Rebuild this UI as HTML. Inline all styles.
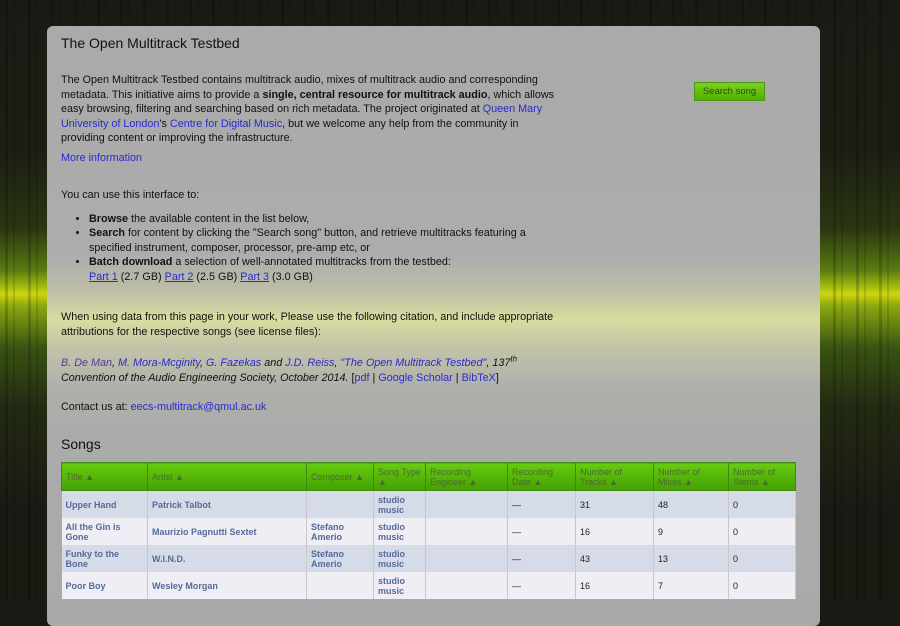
<!DOCTYPE html><html><head><style>
body{margin:0;width:900px;height:600px;overflow:hidden;font-family:"Liberation Sans",sans-serif;
background:linear-gradient(180deg,#1a1a14 0%,#1c1e14 25%,#2a3612 38%,#5a7a10 45%,#a8c010 48%,#d0d410 49%,#8aa810 51%,#3a5212 58%,#222a12 68%,#1a1a14 85%,#1a1a12 100%);}
.stripes{position:absolute;left:0;top:0;width:900px;height:600px;background:repeating-linear-gradient(90deg,rgba(0,0,0,0) 0 5px,rgba(0,0,0,.18) 5px 8px,rgba(0,0,0,0) 8px 13px,rgba(0,0,0,.12) 13px 15px,rgba(0,0,0,0) 15px 23px);}
.panel{position:absolute;left:47px;top:26px;width:773px;height:600px;border-radius:6px;
background:linear-gradient(180deg,#aaaaaa 0%,#acacac 38%,#bcbea8 44%,#d4d6a0 48%,#dadca0 49%,#c4c6a8 53%,#b0b0aa 60%,#ababab 68%,#a9a9a9 100%);font-size:10.8px;color:#111;}
a{color:#2a2ad0;text-decoration:none}
.t{position:absolute;left:14px;}
h1{position:absolute;left:14px;top:9px;margin:0;font-size:14px;font-weight:normal}
p{margin:0;line-height:14.5px}
.btn{position:absolute;left:647px;top:56px;width:69px;height:17px;background:linear-gradient(#7ad020,#52b000);border:1px solid #4a9a10;font-size:9.5px;color:#2a4a10;text-align:center;line-height:17px}
ul{margin:0;padding-left:28px;line-height:14.5px}
table{position:absolute;left:14px;top:436px;border-collapse:collapse;font-size:9px;width:735px}
th{background:linear-gradient(#66cc10,#44a000);color:#4a6a30;font-weight:normal;text-align:left;height:27px;border:1px solid #3c8a10;padding:0 4px;line-height:10px}
td{height:27px;padding:0 4px;border-right:1px solid #c8c8c8;font-weight:bold;color:#556a9a;line-height:10px;vertical-align:middle}
td.n{font-weight:normal;color:#222}
tr.a td{background:#d6dbe8}tr.b td{background:#eeeef4}
</style></head><body><div class="stripes"></div>
<div class="panel">
<h1>The Open Multitrack Testbed</h1>
<div class="btn">Search song</div>
<div class="t" style="top:47px;width:500px"><p>The Open Multitrack Testbed contains multitrack audio, mixes of multitrack audio and corresponding metadata. This initiative aims to provide a <b>single, central resource for multitrack audio</b>, which allows easy browsing, filtering and searching based on rich metadata. The project originated at <a>Queen Mary University of London</a>'s <a>Centre for Digital Music</a>, but we welcome any help from the community in providing content or improving the infrastructure.</p></div>
<div class="t" style="top:125px"><p><a>More information</a></p></div>
<div class="t" style="top:162px;width:500px"><p>You can use this interface to:</p>
<ul style="margin-top:9px"><li><b>Browse</b> the available content in the list below,</li>
<li><b>Search</b> for content by clicking the "Search song" button, and retrieve multitracks featuring a specified instrument, composer, processor, pre-amp etc, or</li>
<li><b>Batch download</b> a selection of well-annotated multitracks from the testbed:<br><a style="text-decoration:underline">Part 1</a> (2.7 GB) <a style="text-decoration:underline">Part 2</a> (2.5 GB) <a style="text-decoration:underline">Part 3</a> (3.0 GB)</li></ul></div>
<div class="t" style="top:284px;width:510px"><p>When using data from this page in your work, Please use the following citation, and include appropriate attributions for the respective songs (see license files):</p></div>
<div class="t" style="top:330px;width:520px"><p><i><a style="color:#5a3aa0">B. De Man</a>, <a>M. Mora-Mcginity</a>, <a>G. Fazekas</a> and <a>J.D. Reiss</a>, <a>"The Open Multitrack Testbed"</a>, 137<sup style="font-size:8px;line-height:0">th</sup><br>Convention of the Audio Engineering Society, October 2014.</i> [<a>pdf</a> | <a>Google Scholar</a> | <a>BibTeX</a>]</p></div>
<div class="t" style="top:374px"><p>Contact us at: <a>eecs-multitrack@qmul.ac.uk</a></p></div>
<div class="t" style="top:410px;font-size:14px">Songs</div>
<table>
<tr><th style="width:77px">Title &#9650;</th><th style="width:150px">Artist &#9650;</th><th style="width:58px">Composer &#9650;</th><th style="width:43px">Song Type &#9650;</th><th style="width:73px">Recording Engineer &#9650;</th><th style="width:59px">Recording Date &#9650;</th><th style="width:69px">Number of Tracks &#9650;</th><th style="width:66px">Number of Mixes &#9650;</th><th>Number of Stems &#9650;</th></tr>
<tr class="a"><td>Upper Hand</td><td>Patrick Talbot</td><td></td><td>studio music</td><td></td><td class="n">—</td><td class="n">31</td><td class="n">48</td><td class="n">0</td></tr>
<tr class="b"><td>All the Gin is Gone</td><td>Maurizio Pagnutti Sextet</td><td>Stefano Amerio</td><td>studio music</td><td></td><td class="n">—</td><td class="n">16</td><td class="n">9</td><td class="n">0</td></tr>
<tr class="a"><td>Funky to the Bone</td><td>W.I.N.D.</td><td>Stefano Amerio</td><td>studio music</td><td></td><td class="n">—</td><td class="n">43</td><td class="n">13</td><td class="n">0</td></tr>
<tr class="b"><td>Poor Boy</td><td>Wesley Morgan</td><td></td><td>studio music</td><td></td><td class="n">—</td><td class="n">16</td><td class="n">7</td><td class="n">0</td></tr>
</table>
</div>
</body></html>
